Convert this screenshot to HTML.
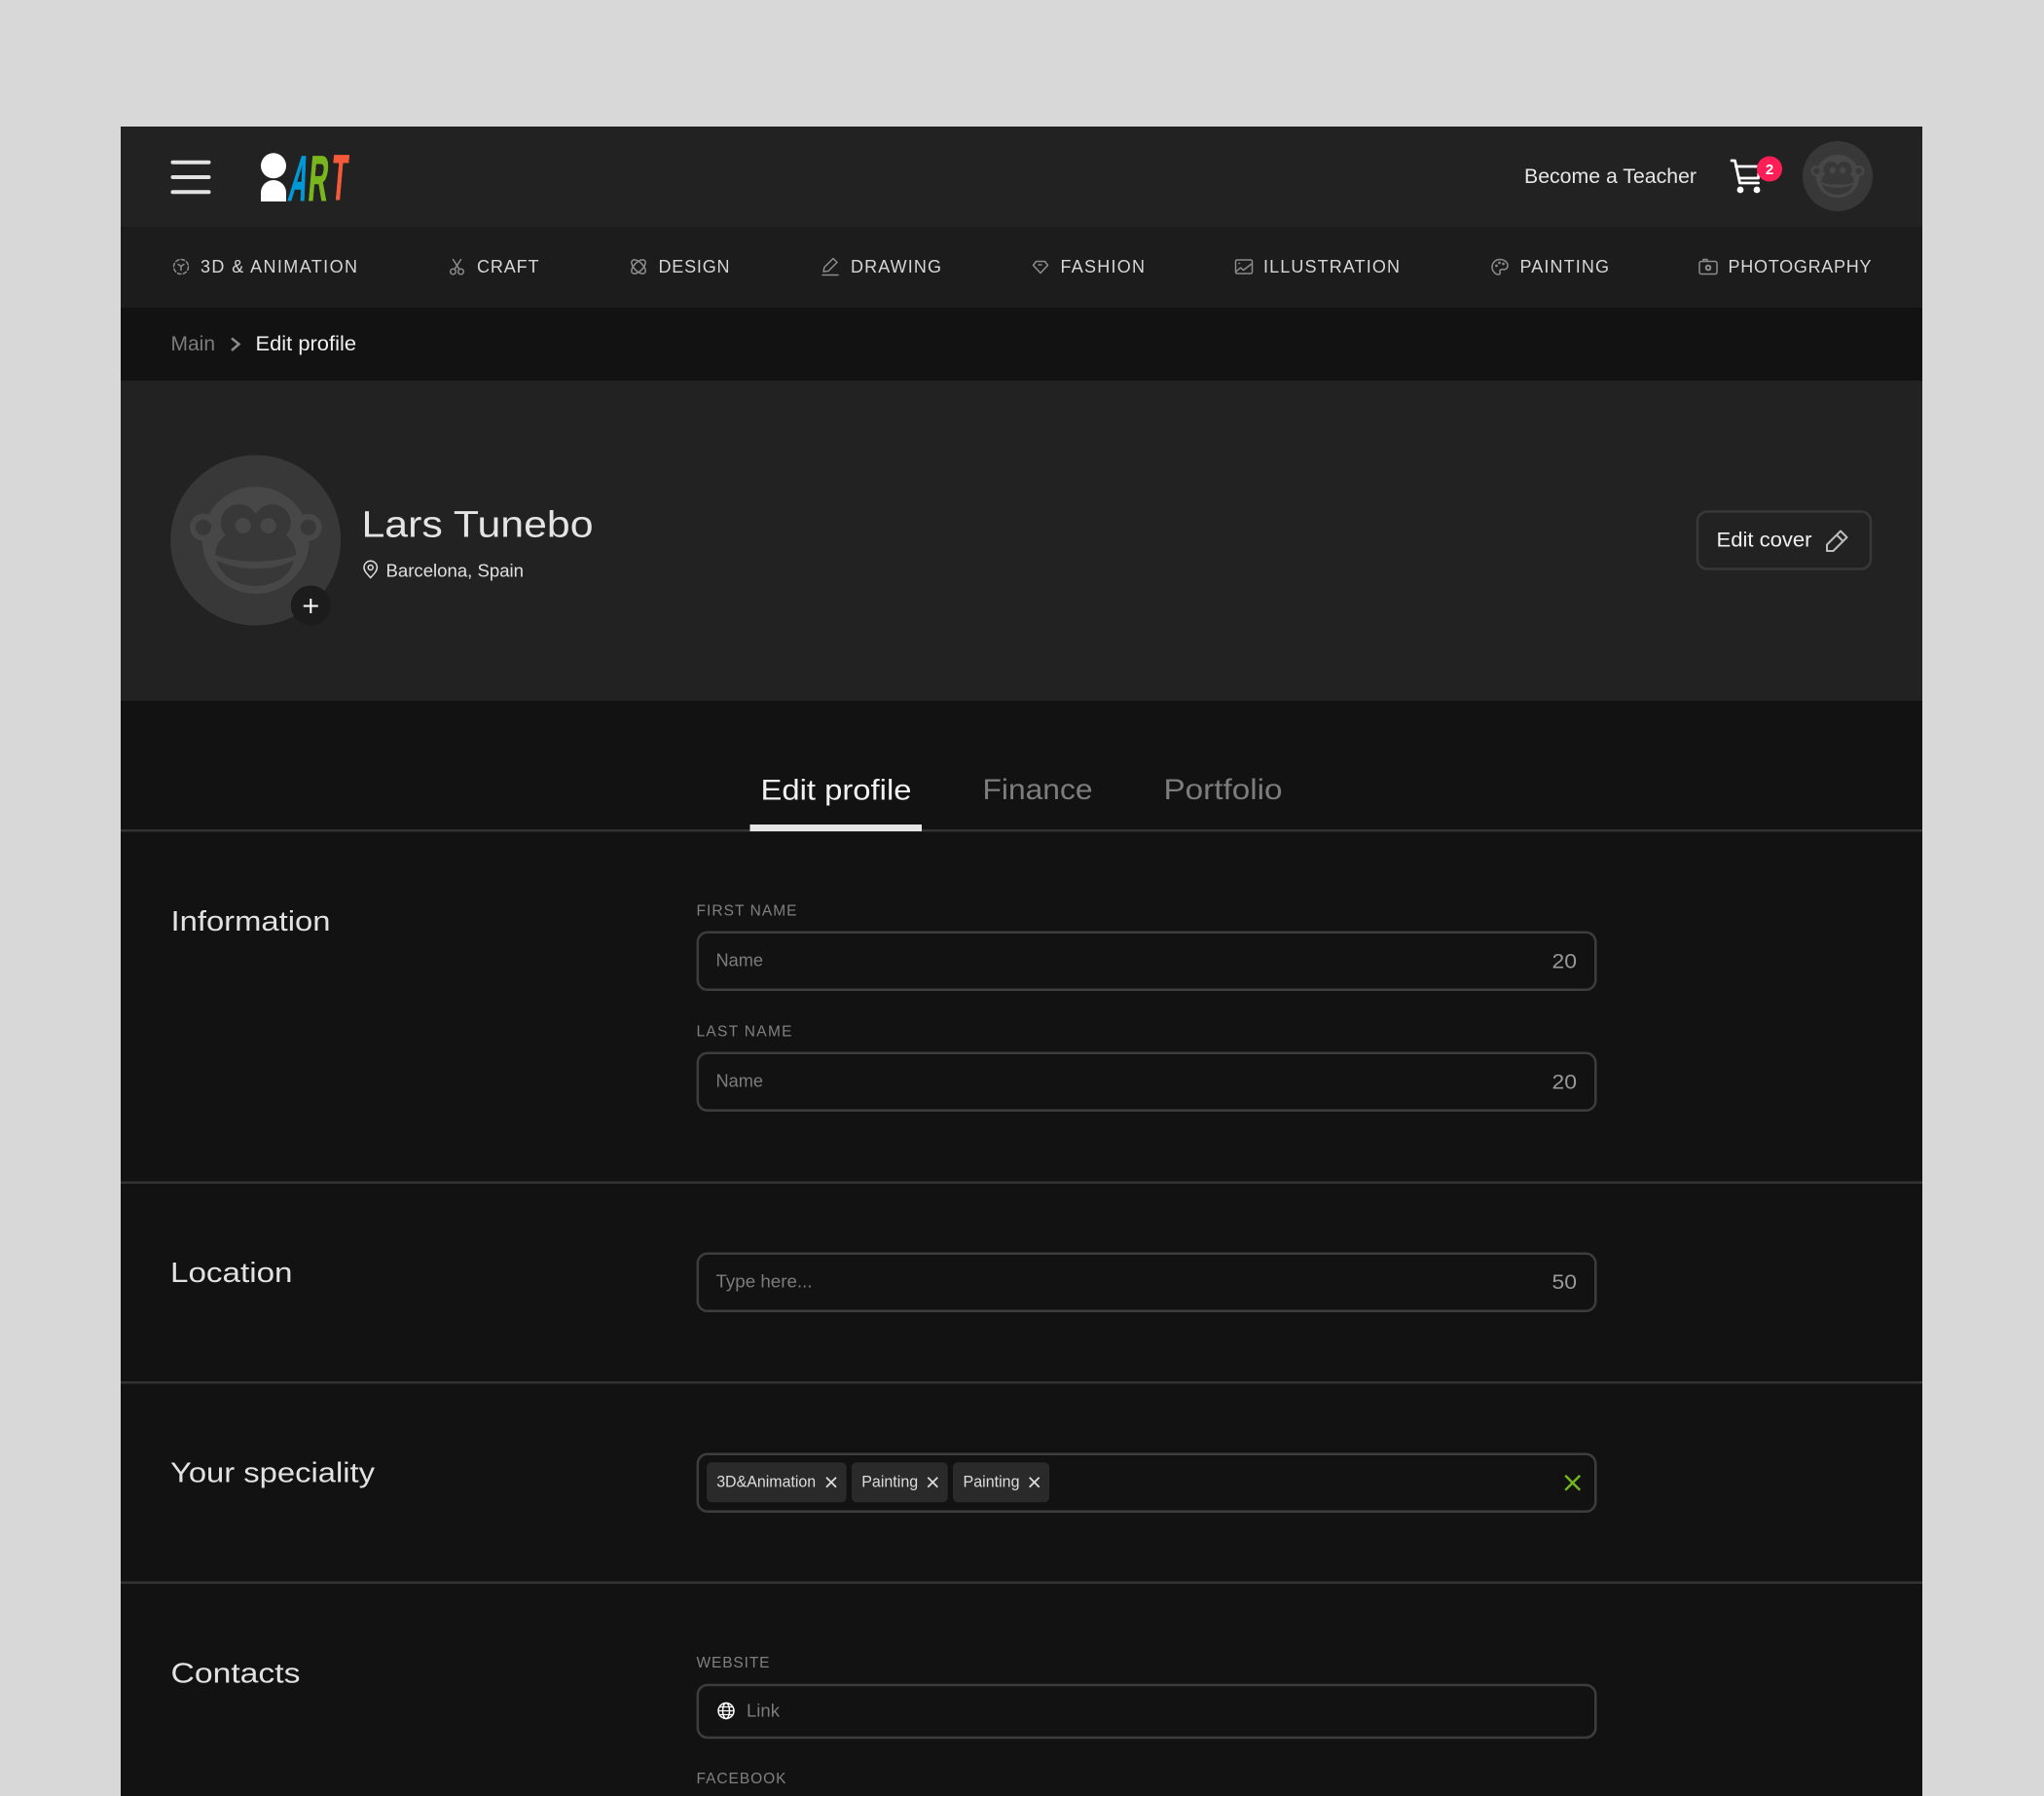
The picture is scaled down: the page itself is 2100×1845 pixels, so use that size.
<!DOCTYPE html>
<html lang="en">
<head>
<meta charset="utf-8">
<title>Edit profile</title>
<style>
html,body{margin:0;padding:0;background:#d8d8d8;width:2100px;height:1845px;overflow:hidden}
.b{position:absolute;left:124px;width:1851px}
svg{position:absolute;left:0;top:0}
text{font-family:"Liberation Sans",sans-serif}
</style>
</head>
<body>
<div class="b" style="top:130px;height:103px;background:#222"></div>
<div class="b" style="top:233px;height:82.5px;background:#1c1c1c"></div>
<div class="b" style="top:315.5px;height:75.5px;background:#121212"></div>
<div class="b" style="top:391px;height:329px;background:#222"></div>
<div class="b" style="top:720px;height:1125px;background:#121212"></div>
<svg width="2100" height="1845" viewBox="0 0 2100 1845" xmlns="http://www.w3.org/2000/svg">
<defs>
<g id="monkey">
  <circle cx="0" cy="0" r="55" fill="#474747"/>
  <circle cx="-53.700" cy="-13.300" r="14" fill="#474747"/><circle cx="-53.700" cy="-13.300" r="8" fill="#383838"/>
  <circle cx="54" cy="-13.300" r="14" fill="#474747"/><circle cx="54" cy="-13.300" r="8" fill="#383838"/>
  <circle cx="-17" cy="-18" r="19" fill="#383838"/><circle cx="17" cy="-18" r="19" fill="#383838"/>
  <path d="M-41.500 15C-41-5-22-13 0-13S41-5 41.500 15C20 24-20 24-41.500 15Z" fill="#383838"/>
  <circle cx="-13" cy="-15" r="8" fill="#474747"/><circle cx="13" cy="-15" r="8" fill="#474747"/>
  <path d="M-40 21C-15 32 15 32 39 21C36 37 19 47 0 47S-36 37-40 21Z" fill="#383838"/>
</g>
</defs>

<!-- header -->
<g fill="#e2e2e2"><rect x="175.500" y="164.800" width="41" height="4" rx="2"/><rect x="175.500" y="180" width="41" height="4" rx="2"/><rect x="175.500" y="195.300" width="41" height="4" rx="2"/></g>
<ellipse cx="281" cy="170.300" rx="13" ry="13" fill="#fff"/>
<path d="M268 207V198a13 13 0 0 1 26 0V207Z" fill="#fff"/>
<g font-weight="700" stroke-width="1">
<text transform="translate(295,206) skewX(-10) scale(.38,1)" font-size="66" fill="#0099d6" stroke="#0099d6">A</text>
<text transform="translate(315.500,206) skewX(-5) scale(.42,1)" font-size="66" fill="#79b51c" stroke="#79b51c">R</text>
<text transform="translate(339,205) skewX(-5) scale(.4,1)" font-size="66" fill="#f4593a" stroke="#f4593a">T</text>
</g>
<text x="1566" y="188" font-size="21" fill="#e6e6e6" textLength="177" lengthAdjust="spacingAndGlyphs">Become a Teacher</text>
<g fill="none" stroke="#fff" stroke-width="2.800" stroke-linecap="round" stroke-linejoin="round">
<path d="M1779 165h3.500l5 23h19"/><path d="M1783.500 171h24l-1 12h-20"/>
</g>
<circle cx="1788" cy="195" r="3.400" fill="#fff"/><circle cx="1805" cy="195" r="3.400" fill="#fff"/>
<circle cx="1818" cy="173.500" r="13" fill="#ff1e56"/>
<text x="1818" y="179" font-size="15" font-weight="700" fill="#fff" text-anchor="middle">2</text>
<circle cx="1888" cy="181" r="36" fill="#383838"/>
<use href="#monkey" transform="translate(1888,181) scale(.405)"/>

<!-- nav -->
<g font-size="18" fill="#d6d6d6">
<text x="206" y="280" textLength="161" lengthAdjust="spacing">3D &amp; ANIMATION</text>
<text x="490" y="280" textLength="63.500" lengthAdjust="spacing">CRAFT</text>
<text x="676.500" y="280" textLength="73" lengthAdjust="spacing">DESIGN</text>
<text x="874" y="280" textLength="93" lengthAdjust="spacing">DRAWING</text>
<text x="1089.500" y="280" textLength="86.500" lengthAdjust="spacing">FASHION</text>
<text x="1298" y="280" textLength="140" lengthAdjust="spacing">ILLUSTRATION</text>
<text x="1561.500" y="280" textLength="91.500" lengthAdjust="spacing">PAINTING</text>
<text x="1775.500" y="280" textLength="147" lengthAdjust="spacing">PHOTOGRAPHY</text>
</g>
<g fill="none" stroke="#8c8c8c" stroke-width="1.500" stroke-linecap="round" stroke-linejoin="round">
<g transform="translate(186,274)"><circle r="7.500" stroke-dasharray="3.500 2.400"/><path d="M-3-2.500L0-.5L3-2.500M0-.5V3.500"/></g>
<g transform="translate(469.500,274)"><circle cx="-4" cy="5" r="2.800"/><circle cx="4" cy="5" r="2.800"/><path d="M-2.500 2.800L4-7.500M2.500 2.800L-4-7.500"/></g>
<g transform="translate(656,274)"><ellipse rx="9" ry="4.500" transform="rotate(45)"/><ellipse rx="9" ry="4.500" transform="rotate(-45)"/></g>
<g transform="translate(853,274)"><path d="M-7 5L-6 .5L3-8.500L7-4.500L-2 4.500Z"/><path d="M-8 8.500H8"/></g>
<g transform="translate(1069,274)"><path d="M-4.500-5.500H4.500L7.500-1.500L0 6.500L-7.500-1.500Z"/><path d="M-2-2H1"/></g>
<g transform="translate(1278,274)"><rect x="-8.500" y="-7" width="17" height="14" rx="1.500"/><path d="M-8 5L-3.500 1L-.5 3.500L8-3"/><path d="M-5-3.500h.5"/></g>
<g transform="translate(1541,274)"><path d="M0-7.500C-5-7.500-8-3.500-8 .5S-4.500 8-1.500 8C.5 8 .5 6 0 5C-.5 3.500 1 2.500 3 2.800C6 3.200 8 1.500 8-1C8-5 4-7.500 0-7.500Z"/><circle cx="-3.500" cy="-1" r=".6"/><circle cx="-.5" cy="-4" r=".6"/><circle cx="3.500" cy="-3" r=".6"/></g>
<g transform="translate(1755,274)"><rect x="-9" y="-5.500" width="18" height="13" rx="2"/><path d="M-5-5.500V-7.500H-1V-5.500"/><circle cx="0" cy="1" r="2.300" stroke-width="2"/></g>
</g>

<!-- breadcrumb -->
<text x="175.500" y="360" font-size="21" fill="#7c7c7c" textLength="45.500" lengthAdjust="spacingAndGlyphs">Main</text>
<path d="M238 347.500L245.500 353.500L238 360" fill="none" stroke="#8a8a8a" stroke-width="2.500"/>
<text x="262.500" y="360" font-size="21" fill="#f0f0f0" textLength="103.500" lengthAdjust="spacingAndGlyphs">Edit profile</text>

<!-- profile -->
<circle cx="262.700" cy="555" r="87.500" fill="#383838"/>
<use href="#monkey" transform="translate(262.700,555)"/>
<circle cx="319.300" cy="622" r="20.500" fill="#1c1c1c"/>
<path d="M311.800 622.500h15M319.300 615v15" stroke="#fff" stroke-width="2"/>
<text x="371.500" y="551.500" font-size="38" fill="#e4e4e4" textLength="238" lengthAdjust="spacingAndGlyphs">Lars Tunebo</text>
<g fill="none" stroke="#e0e0e0" stroke-width="1.500"><path d="M380.700 593.500C377 589.500 374 586.500 374 583a6.700 6.700 0 0 1 13.400 0C387.400 586.500 384.400 589.500 380.700 593.500Z"/><circle cx="380.700" cy="583" r="2.500"/></g>
<text x="396.500" y="592.300" font-size="18" fill="#e0e0e0" textLength="141.500" lengthAdjust="spacingAndGlyphs">Barcelona, Spain</text>
<rect x="1744" y="525.500" width="178" height="59" rx="10" fill="none" stroke="#383838" stroke-width="2.500"/>
<text x="1763.500" y="561.700" font-size="21.500" fill="#f0f0f0" textLength="98" lengthAdjust="spacingAndGlyphs">Edit cover</text>
<g fill="none" stroke="#bdbdbd" stroke-width="2" stroke-linejoin="round"><path d="M1877 559.500L1891 545.500L1897.500 552L1883.500 566H1877Z"/><path d="M1887 549.500L1893.500 556"/></g>

<!-- tabs -->
<text x="781.500" y="821.700" font-size="30" fill="#f2f2f2" textLength="155" lengthAdjust="spacingAndGlyphs">Edit profile</text>
<text x="1009.500" y="821" font-size="30" fill="#7d7d7d" textLength="113" lengthAdjust="spacingAndGlyphs">Finance</text>
<text x="1195.500" y="821" font-size="30" fill="#7d7d7d" textLength="122" lengthAdjust="spacingAndGlyphs">Portfolio</text>
<g fill="#333"><rect x="124" y="852" width="1851" height="2.500"/><rect x="124" y="1213.500" width="1851" height="2.500"/><rect x="124" y="1419" width="1851" height="2.500"/><rect x="124" y="1624.500" width="1851" height="2.500"/></g>
<rect x="770.500" y="847" width="176.500" height="7" fill="#e6e6e6"/>

<!-- section titles -->
<g font-size="29" fill="#e2e2e2">
<text x="175.500" y="956" textLength="164" lengthAdjust="spacingAndGlyphs">Information</text>
<text x="175" y="1317" textLength="125.500" lengthAdjust="spacingAndGlyphs">Location</text>
<text x="175" y="1522.300" textLength="210" lengthAdjust="spacingAndGlyphs">Your speciality</text>
<text x="175.500" y="1728.300" textLength="133" lengthAdjust="spacingAndGlyphs">Contacts</text>
</g>

<!-- inputs -->
<g fill="none" stroke="#3d3d3d" stroke-width="2.500">
<rect x="716.800" y="957.800" width="922.500" height="59" rx="10"/>
<rect x="716.800" y="1081.800" width="922.500" height="59" rx="10"/>
<rect x="716.800" y="1287.800" width="922.500" height="59" rx="10"/>
<rect x="716.800" y="1493.800" width="922.500" height="59" rx="10"/>
<rect x="716.800" y="1731" width="922.500" height="54" rx="10"/>
</g>
<g font-size="15.500" fill="#808080">
<text x="715.500" y="940.500" textLength="103" lengthAdjust="spacing">FIRST NAME</text>
<text x="715.500" y="1064.500" textLength="98" lengthAdjust="spacing">LAST NAME</text>
<text x="715.500" y="1713" textLength="75" lengthAdjust="spacing">WEBSITE</text>
<text x="715.500" y="1832" textLength="92" lengthAdjust="spacing">FACEBOOK</text>
</g>
<g font-size="18" fill="#7c7c7c">
<text x="735.500" y="992.700" textLength="48.500" lengthAdjust="spacingAndGlyphs">Name</text>
<text x="735.500" y="1116.700" textLength="48.500" lengthAdjust="spacingAndGlyphs">Name</text>
<text x="735.500" y="1322.700" textLength="99" lengthAdjust="spacingAndGlyphs">Type here...</text>
<text x="767" y="1763.300" textLength="34" lengthAdjust="spacingAndGlyphs">Link</text>
</g>
<g font-size="21" fill="#999">
<text x="1594.500" y="994.300" textLength="25.500" lengthAdjust="spacingAndGlyphs">20</text>
<text x="1594.500" y="1118.300" textLength="25.500" lengthAdjust="spacingAndGlyphs">20</text>
<text x="1594.500" y="1324" textLength="25.500" lengthAdjust="spacingAndGlyphs">50</text>
</g>

<!-- tags -->
<g fill="#2a2a2a"><rect x="726" y="1502.300" width="143.700" height="41" rx="5"/><rect x="875" y="1502.300" width="98.700" height="41" rx="5"/><rect x="979" y="1502.300" width="99" height="41" rx="5"/></g>
<g font-size="16.500" fill="#dcdcdc">
<text x="736.200" y="1527.700" textLength="102" lengthAdjust="spacingAndGlyphs">3D&amp;Animation</text>
<text x="885.200" y="1527.700" textLength="58" lengthAdjust="spacingAndGlyphs">Painting</text>
<text x="989.500" y="1527.700" textLength="58" lengthAdjust="spacingAndGlyphs">Painting</text>
</g>
<g fill="none" stroke="#dcdcdc" stroke-width="1.800">
<path d="M849 1517.700l10 10M859 1517.700l-10 10"/>
<path d="M953.300 1517.700l10 10M963.300 1517.700l-10 10"/>
<path d="M1057.700 1517.700l10 10M1067.700 1517.700l-10 10"/>
</g>
<path d="M1608.200 1515.800l15 15M1623.200 1515.800l-15 15" fill="none" stroke="#72b51d" stroke-width="2.500"/>

<!-- globe -->
<g fill="none" stroke="#fff" stroke-width="1.500"><circle cx="746" cy="1757.500" r="8"/><ellipse cx="746" cy="1757.500" rx="3.500" ry="8"/><path d="M738 1757.500h16M739 1753.500h14M739 1761.500h14" stroke-width="1.200"/></g>
</svg>
</body>
</html>
